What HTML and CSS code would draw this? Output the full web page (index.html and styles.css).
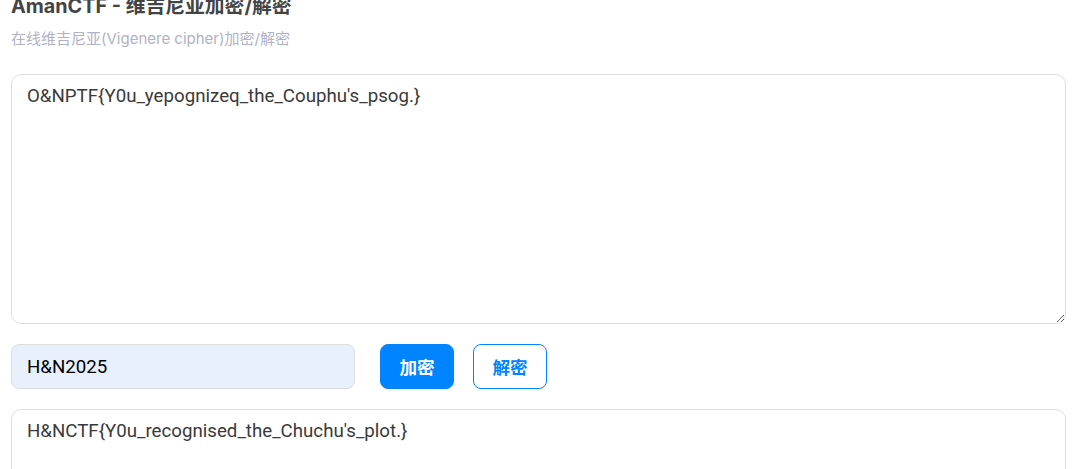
FILE: index.html
```
<!DOCTYPE html>
<html lang="en">
<head>
    <meta charset="UTF-8">
    <meta name="viewport" content="width=device-width, initial-scale=1.0">
    <link rel="stylesheet" href="styles.css">
    <title>AmanCTF - 维吉尼亚加密/解密</title>
</head>
<body>
    <div class="container">
        <h1 class="title">AmanCTF - 维吉尼亚加密/解密</h1>
        <p class="subtitle">在线维吉尼亚(Vigenere cipher)加密/解密</p>

        <textarea class="text-box input-box" id="input">O&amp;NPTF{Y0u_yepognizeq_the_Couphu's_psog.}</textarea>

        <div class="controls">
            <input class="key-input" type="text" id="key" value="H&amp;N2025">
            <button class="btn btn-primary" id="encrypt">加密</button>
            <button class="btn btn-outline" id="decrypt">解密</button>
        </div>

        <textarea class="text-box output-box" id="output">H&amp;NCTF{Y0u_recognised_the_Chuchu's_plot.}</textarea>
    </div>
</body>
</html>
```
FILE: styles.css
```
body {
    margin: 0;
    font-family: Inter, 'Noto Sans CJK SC', sans-serif;
    background-color: #fff;
    color: #333;
}

.container {
    padding: 0 15px 0 11px;
}

.title {
    margin: -7px 0 0;
    font-size: 19.8px;
    line-height: 26px;
    font-weight: 700;
    color: #444;
}

.subtitle {
    margin: 10px 0 0;
    font-size: 15px;
    line-height: 20px;
    color: #b0b2c6;
}

.text-box {
    display: block;
    width: 100%;
    box-sizing: border-box;
    padding: 7px 15px;
    border: 1px solid #dedede;
    border-radius: 10px;
    font-family: Roboto, 'Noto Sans CJK SC', sans-serif;
    font-size: 18.7px;
    line-height: 28px;
    color: #3a3a3a;
    background-color: #fff;
}

.input-box {
    margin-top: 25px;
    height: 250px;
}

.output-box {
    margin-top: 20px;
    height: 200px;
}

.controls {
    display: flex;
    align-items: center;
    margin-top: 20px;
}

.key-input {
    width: 344px;
    height: 45px;
    box-sizing: border-box;
    padding: 0 15px;
    border: 1px solid #dedede;
    border-radius: 8px;
    background-color: #e8f0fe;
    font-family: Roboto, sans-serif;
    font-size: 18.7px;
    color: #000;
}

.btn {
    width: 74px;
    height: 45px;
    padding: 0;
    border-radius: 8px;
    font-family: Inter, 'Noto Sans CJK SC', sans-serif;
    font-size: 17.6px;
    font-weight: 700;
    cursor: pointer;
}

.btn-primary {
    margin-left: 25px;
    background-color: #0084ff;
    border: 1px solid #0084ff;
    color: #fff;
}

.btn-outline {
    margin-left: 19px;
    background-color: #fff;
    border: 1px solid #0084ff;
    color: #0084ff;
}
```
